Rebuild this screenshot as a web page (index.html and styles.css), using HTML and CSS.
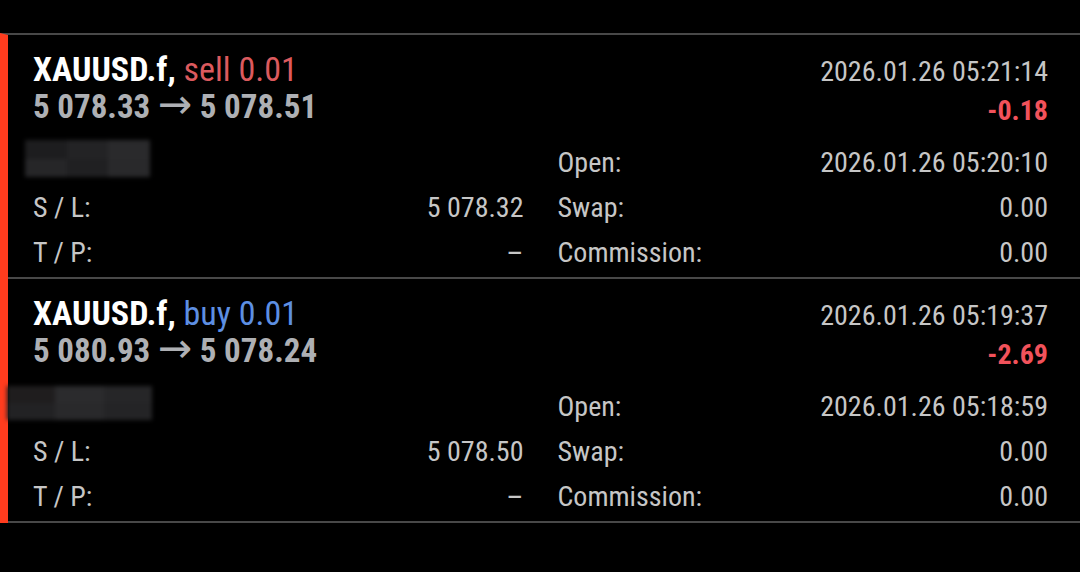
FILE: index.html
```html
<!DOCTYPE html>
<html>
<head>
<meta charset="utf-8">
<link rel="stylesheet" href="styles.css">
</head>
<body>
<div class="list">
  <div class="trade">
    <div class="head">
      <div class="title"><span class="sym">XAUUSD.f,</span> <span class="sell">sell 0.01</span></div>
      <div class="time">2026.01.26 05:21:14</div>
      <div class="prices">5 078.33 <span class="arrow">→</span> 5 078.51</div>
      <div class="profit">-0.18</div>
    </div>
    <div class="details">
      <div class="cell"><div class="blur b1"><i></i><i></i><i></i><i></i><i></i><i></i></div></div>
      <div class="cell"><span>Open:</span><span>2026.01.26 05:20:10</span></div>
      <div class="cell"><span>S / L:</span><span>5 078.32</span></div>
      <div class="cell"><span>Swap:</span><span>0.00</span></div>
      <div class="cell"><span>T / P:</span><span class="dash">–</span></div>
      <div class="cell"><span>Commission:</span><span>0.00</span></div>
    </div>
  </div>
  <div class="trade">
    <div class="head">
      <div class="title"><span class="sym">XAUUSD.f,</span> <span class="buy">buy 0.01</span></div>
      <div class="time">2026.01.26 05:19:37</div>
      <div class="prices">5 080.93 <span class="arrow">→</span> 5 078.24</div>
      <div class="profit">-2.69</div>
    </div>
    <div class="details">
      <div class="cell"><div class="blur b2"><i></i><i></i><i></i><i></i><i></i><i></i></div></div>
      <div class="cell"><span>Open:</span><span>2026.01.26 05:18:59</span></div>
      <div class="cell"><span>S / L:</span><span>5 078.50</span></div>
      <div class="cell"><span>Swap:</span><span>0.00</span></div>
      <div class="cell"><span>T / P:</span><span class="dash">–</span></div>
      <div class="cell"><span>Commission:</span><span>0.00</span></div>
    </div>
  </div>
</div>
</body>
</html>
```
FILE: styles.css
```css
html, body {
  margin: 0;
  padding: 0;
  background: #000;
}
body {
  font-family: "Roboto Condensed", Roboto, "Liberation Sans", sans-serif;
  font-size: 28px;
  color: #c6c6c6;
  padding-top: 33px;
  height: 539px;
  overflow: hidden;
}
.list {
  border-left: 8px solid #ff3c1e;
  border-top: 2px solid #484848;
}
.trade {
  border-bottom: 2px solid #484848;
  padding: 16px 32px 2px 25px;
}
.head {
  display: grid;
  grid-template-columns: 1fr auto;
  grid-auto-rows: 37px;
  align-items: baseline;
  line-height: 37px;
}
.title {
  font-size: 34px;
  color: #fff;
}
.sym {
  font-weight: 700;
}
.sell { color: #dc5a5e; }
.buy { color: #5d8fe3; }
.time {
  text-align: right;
}
.prices {
  font-weight: 700;
  color: #aeb0b4;
  font-size: 33px;
}
.arrow {
  font-family: "DejaVu Sans", sans-serif;
  font-weight: 400;
  font-size: 41px;
  line-height: 0;
}
.profit {
  text-align: right;
  font-weight: 700;
  color: #f2525b;
  position: relative;
  top: 2px;
}
.details {
  margin-top: 15px;
  display: grid;
  grid-template-columns: 1fr 1fr;
  column-gap: 34px;
  line-height: 45px;
}
.cell {
  display: flex;
  justify-content: space-between;
  height: 45px;
}
.dash {
  font-size: 30px;
}
.blur {
  display: grid;
  grid-template-columns: repeat(3, 1fr);
  filter: blur(2px);
  height: 37px;
}
.blur i {
  display: block;
}
.b1 {
  margin-left: -8px;
  width: 125px;
}
.b1 i:nth-child(1) { background: #1d1d1f; }
.b1 i:nth-child(2) { background: #232325; }
.b1 i:nth-child(3) { background: #2a2a2c; }
.b1 i:nth-child(4) { background: #262628; }
.b1 i:nth-child(5) { background: #202022; }
.b1 i:nth-child(6) { background: #29292b; }
.b2 {
  margin-left: -26px;
  margin-top: 2px;
  width: 145px;
  height: 34px;
}
.b2 i:nth-child(1) { background: #1f1d1e; }
.b2 i:nth-child(2) { background: #2b2b2d; }
.b2 i:nth-child(3) { background: #262628; }
.b2 i:nth-child(4) { background: #222224; }
.b2 i:nth-child(5) { background: #29292b; }
.b2 i:nth-child(6) { background: #242426; }
```
